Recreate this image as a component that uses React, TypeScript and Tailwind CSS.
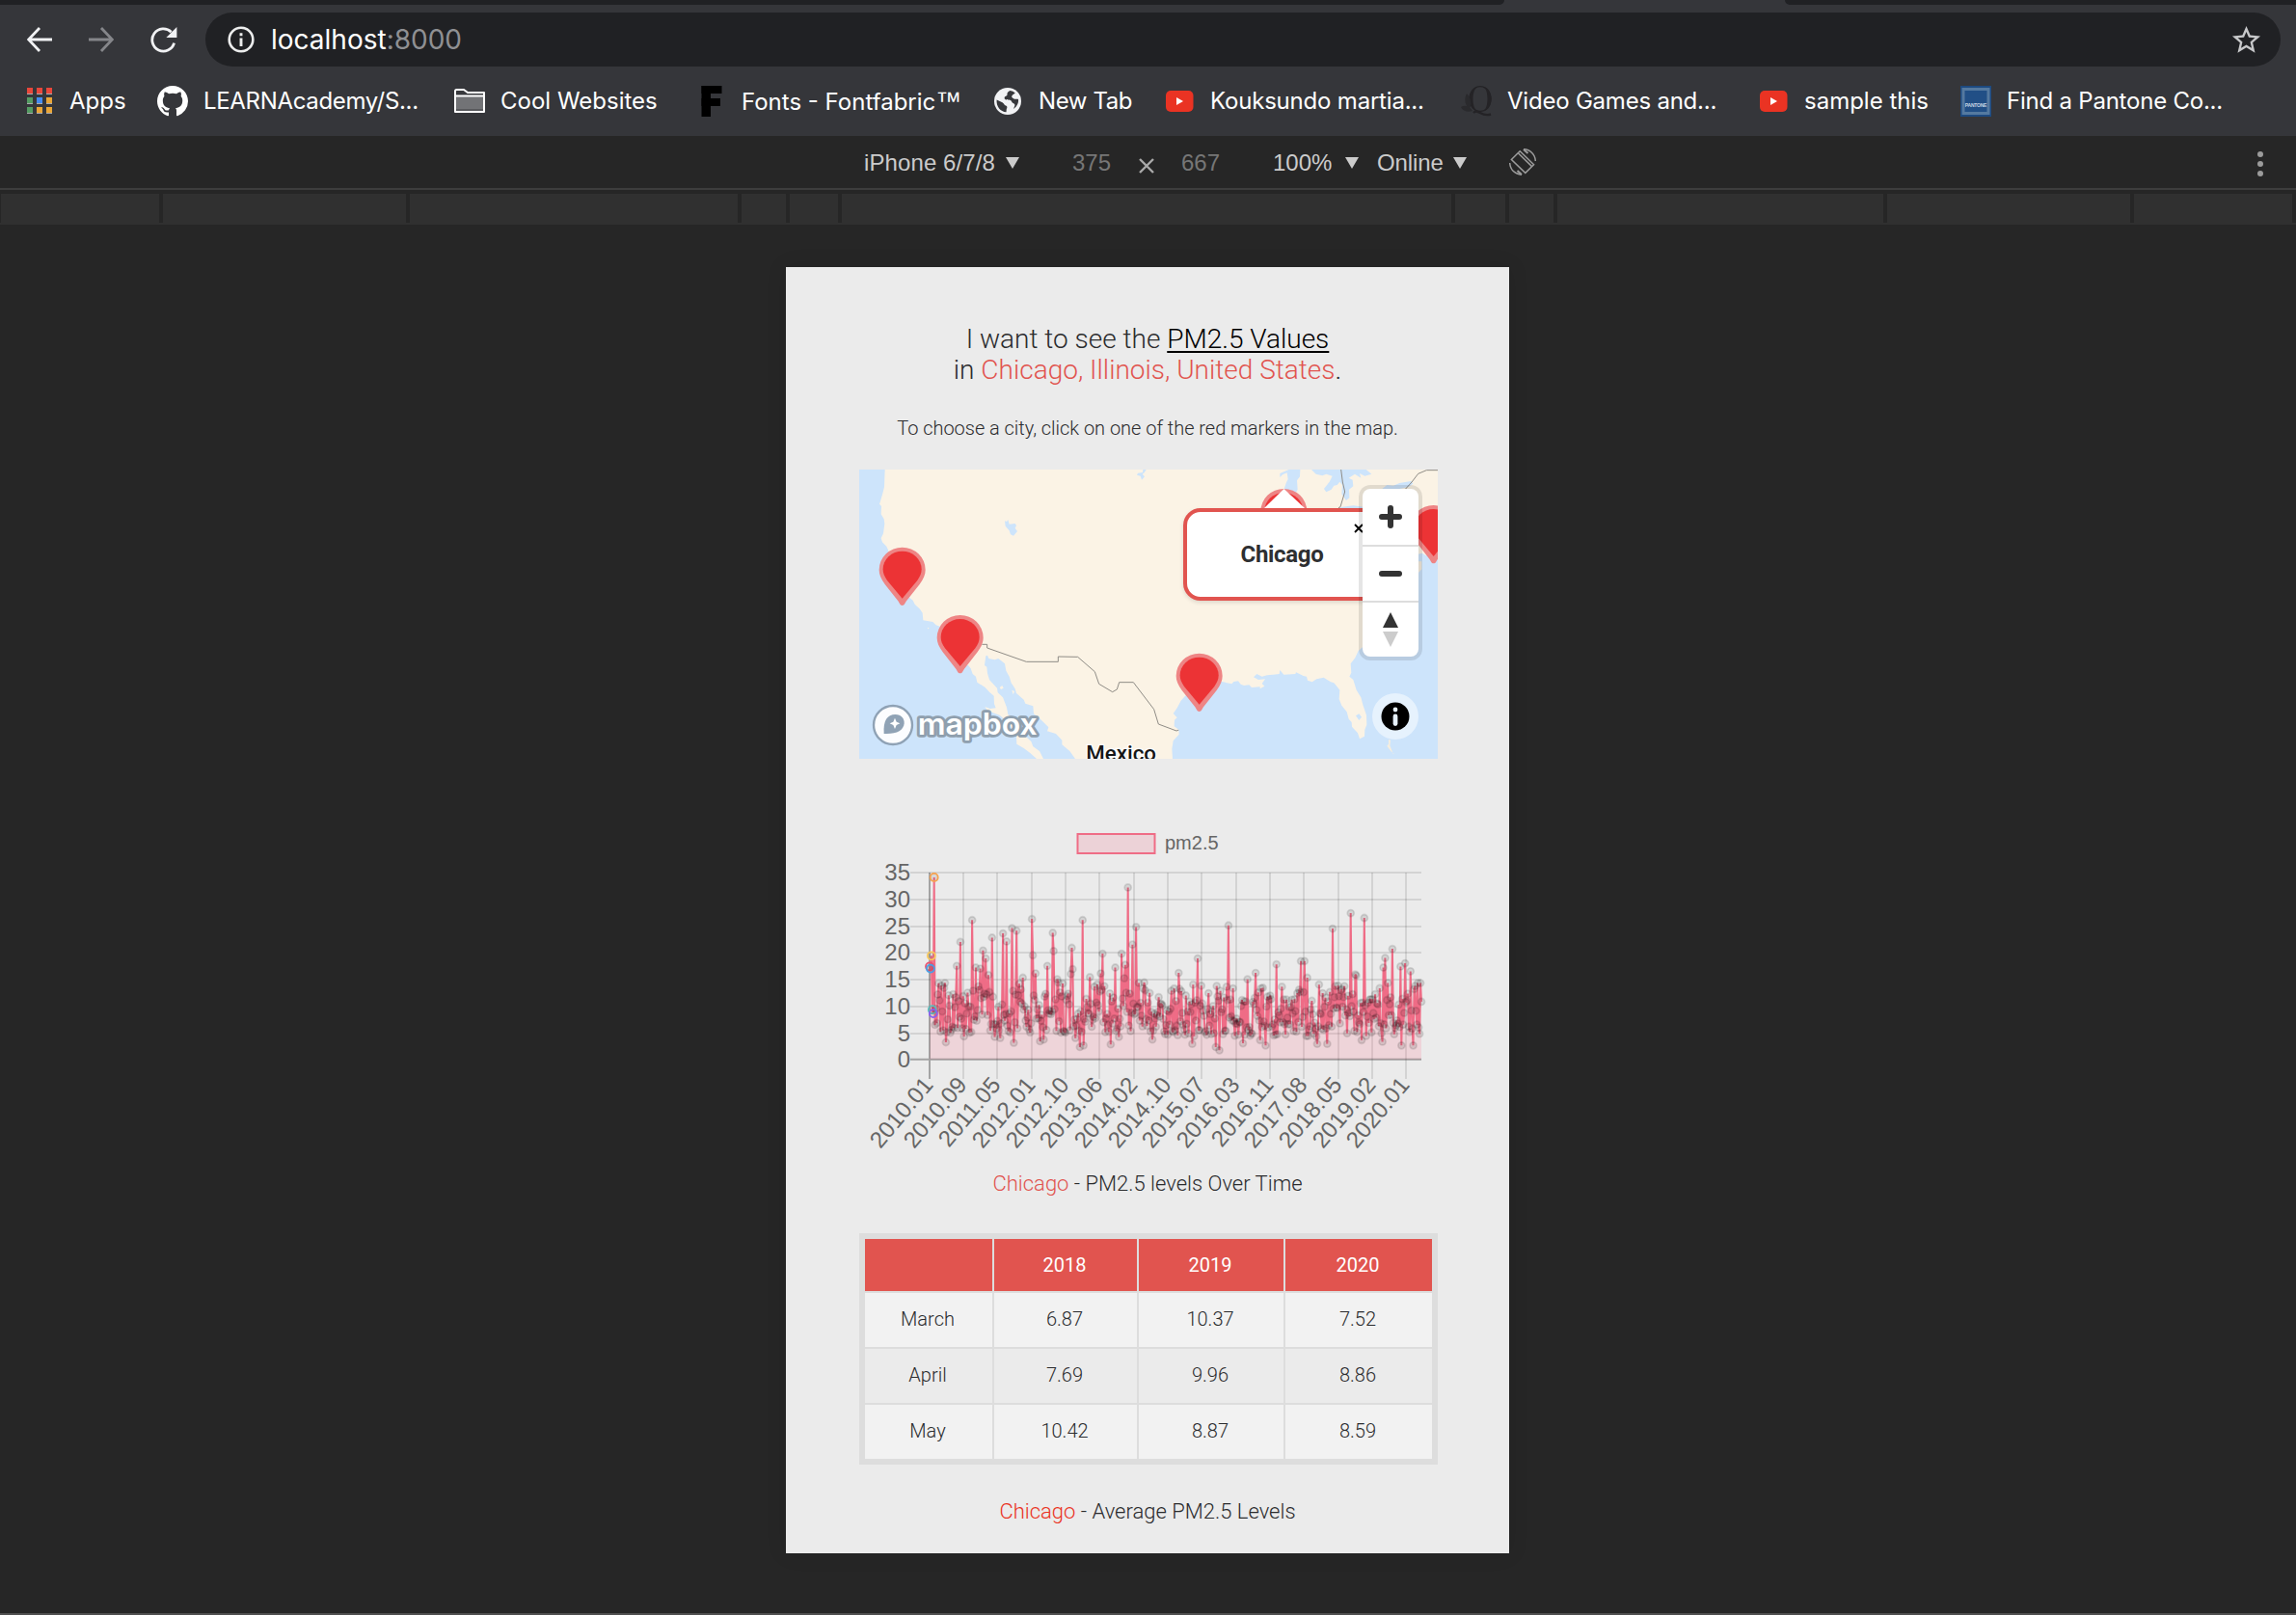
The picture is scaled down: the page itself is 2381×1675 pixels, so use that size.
import React from "react";

/* ---------- Browser chrome ---------- */

function ArrowIcon({ flip = false }: { flip?: boolean }) {
  return (
    <svg viewBox="0 0 26 26" className={flip ? "h-[26px] w-[26px] rotate-180 text-[#85868a]" : "h-[26px] w-[26px] text-[#f1f2f4]"}>
      <path d="M26 13H2M13 1L1.6 13L13 25" fill="none" stroke="currentColor" strokeWidth="2.8" />
    </svg>
  );
}

function ReloadIcon() {
  return (
    <svg viewBox="0 0 28 28" className="h-7 w-7">
      <path d="M24.6 17.6A11.6 11.6 0 1 1 21.6 6.2" fill="none" stroke="#f1f2f4" strokeWidth="2.8" />
      <path d="M27.4 1V12H16.4Z" fill="#f1f2f4" />
    </svg>
  );
}

function AppsIcon() {
  const rows = [
    ["#e8473b", "#e8473b", "#e8473b"],
    ["#559c63", "#438bf2", "#eaa637"],
    ["#559c63", "#eaa637", "#eaa637"],
  ];
  return (
    <svg viewBox="0 0 32 32" className="h-8 w-8">
      {rows.map((row, r) =>
        row.map((fill, c) => (
          <g key={`${r}-${c}`}>
            <rect x={4 + c * 10} y={2 + r * 10} width="6" height="7" fill="#a9aaac" />
            <rect x={4 + c * 10} y={2 + r * 10} width="6" height="6" fill={fill} />
          </g>
        ))
      )}
    </svg>
  );
}

function GithubIcon() {
  return (
    <svg viewBox="0 0 16 16" className="h-8 w-8">
      <path
        fill="#fff"
        d="M8 0C3.58 0 0 3.58 0 8c0 3.54 2.29 6.53 5.47 7.59.4.07.55-.17.55-.38 0-.19-.01-.82-.01-1.49-2.01.37-2.53-.49-2.69-.94-.09-.23-.48-.94-.82-1.13-.28-.15-.68-.52-.01-.53.63-.01 1.08.58 1.23.82.72 1.21 1.87.87 2.33.66.07-.52.28-.87.51-1.07-1.78-.2-3.64-.89-3.64-3.95 0-.87.31-1.59.82-2.15-.08-.2-.36-1.02.08-2.12 0 0 .67-.21 2.2.82.64-.18 1.32-.27 2-.27s1.36.09 2 .27c1.53-1.04 2.2-.82 2.2-.82.44 1.1.16 1.92.08 2.12.51.56.82 1.27.82 2.15 0 3.07-1.87 3.75-3.65 3.95.29.25.54.73.54 1.48 0 1.07-.01 1.93-.01 2.2 0 .21.15.46.55.38A8.01 8.01 0 0 0 16 8c0-4.42-3.58-8-8-8z"
      />
    </svg>
  );
}

function FolderIcon() {
  return (
    <svg viewBox="0 0 32 32" className="h-8 w-8">
      <path d="M1 7V27H31V7H14L10 4H2.500Q1 4 1 5.500Z" fill="#38393d" stroke="#fff" strokeWidth="2" strokeLinejoin="round" />
      <path d="M2 11H30V26H2Z" fill="#727376" />
      <path d="M2 24H30V26H2Z" fill="#58595c" />
      <path d="M1 10.500H31" stroke="#fff" strokeWidth="2" />
    </svg>
  );
}

function FontfabricIcon() {
  return (
    <svg viewBox="0 0 32 32" className="h-8 w-8">
      <rect x="6.500" y="0" width="9.500" height="32" fill="#000" />
      <rect x="6.500" y="0" width="21" height="8" fill="#000" />
      <rect x="6.500" y="13" width="19.500" height="8" fill="#000" />
    </svg>
  );
}

function GlobeIcon() {
  return (
    <svg viewBox="0 0 32 32" className="h-8 w-8">
      <circle cx="16" cy="16" r="14" fill="#f1f2f4" />
      <path d="M4.600 14.500L10.500 17.300C12.500 18.300 12 20.200 14 20.400C15.500 20.600 15.800 22.500 14.800 24L14.500 27.200C8.500 27 4 21.500 4.600 14.500Z" fill="#36373b" />
      <path d="M18.500 5C16.500 6 15 7 15.500 9.500C15 11 12 10.500 12.800 13.500C14 15.500 18.500 13.500 20 16C20.500 18.500 23 17.500 23.500 20L22 24C25.500 21.500 27.500 18 27 14C25.500 13 24.500 14.500 22.500 13.500C20 12 19.500 11.500 21 9.500L23.800 7.400Q21.500 5.500 18.500 5Z" fill="#36373b" />
    </svg>
  );
}

function YoutubeIcon() {
  return (
    <svg viewBox="0 0 32 32" className="h-8 w-8">
      <rect x="2" y="5" width="28.500" height="22" rx="5" fill="#ea3323" />
      <path d="M13 12V20L20 16Z" fill="#fff" />
    </svg>
  );
}

function QuillIcon() {
  return (
    <svg viewBox="0 0 32 32" className="h-8 w-8">
      <ellipse cx="20" cy="13.500" rx="11" ry="12.800" fill="none" stroke="#242326" strokeWidth="1.300" />
      <path d="M12.500 13.500C12.500 7 14.500 3 17 1C12 2 8.500 7.500 8.500 13.500C8.500 20 12 25 17 26.500C14 24 12.500 20 12.500 13.500ZM27.500 13.500C27.500 7 26 3 23.500 1C28.500 2 31.500 7.500 31.500 13.500C31.500 20 28.500 25 23.500 26.500C26 24 27.500 20 27.500 13.500Z" fill="#242326" />
      <path d="M13 28C18 23 21 33 31 29.500" fill="none" stroke="#242326" strokeWidth="2.400" />
      <path d="M6 8C11 13 11 20 9 24C4 20 3 14 6 8ZM0 22C5 19 10 22 12 26C7 28 2 26 0 22Z" fill="#2a2a2d" />
    </svg>
  );
}

function PantoneIcon() {
  return (
    <svg viewBox="0 0 32 32" className="h-8 w-8">
      <rect width="32" height="32" fill="#1d4a80" />
      <rect x="3" y="3.500" width="26" height="25" fill="#214f86" stroke="#54799f" strokeWidth="3" />
      <text x="16" y="22.300" textAnchor="middle" fill="#c9d6e4" className="font-['Liberation_Sans'] text-[5px] font-bold">
        PANTONE
      </text>
    </svg>
  );
}

const bookmarks = [
  { label: "Apps", icon: <AppsIcon />, box: "w-[139px]" },
  { label: "LEARNAcademy/S...", icon: <GithubIcon />, box: "w-[308px] tracking-[-0.33px]" },
  { label: "Cool Websites", icon: <FolderIcon />, box: "w-[250px]" },
  { label: "Fonts - Fontfabric", mark: "™", icon: <FontfabricIcon />, box: "w-[308px]" },
  { label: "New Tab", icon: <GlobeIcon />, box: "w-[178px] tracking-[-0.4px]" },
  { label: "Kouksundo martia...", icon: <YoutubeIcon />, box: "w-[308px] tracking-[-0.2px]" },
  { label: "Video Games and...", icon: <QuillIcon />, box: "w-[308px] tracking-[-0.22px]" },
  { label: "sample this", icon: <YoutubeIcon />, box: "w-[210px]" },
  { label: "Find a Pantone Co...", icon: <PantoneIcon />, box: "w-[308px] tracking-[-0.22px]" },
];

function BrowserBar() {
  return (
    <header className="h-[141px] bg-[#35363a] font-[Inter,sans-serif] text-white">
      <div className="flex h-[5px] justify-between">
        <div className="w-[1560px] rounded-br-[8px] bg-[#202124]" />
        <div className="w-[530px] rounded-bl-[8px] bg-[#202124]" />
      </div>
      <div className="flex h-[72px] items-center pl-7">
        <ArrowIcon />
        <div className="ml-[38px]">
          <ArrowIcon flip />
        </div>
        <div className="ml-[38px]">
          <ReloadIcon />
        </div>
        <div className="ml-[29px] flex h-14 w-[2152px] items-center rounded-full bg-[#202124] pr-[18px] pl-[23px]">
          <svg viewBox="0 0 28 28" className="h-7 w-7">
            <circle cx="14" cy="14" r="12.300" fill="none" stroke="#eceded" strokeWidth="2.600" />
            <path d="M14 7.300v2.900M14 12.500V21" stroke="#eceded" strokeWidth="2.900" />
          </svg>
          <p className="ml-[17px] text-[28px] leading-none">
            localhost<span className="text-[#8f9093]">:8000</span>
          </p>
          <svg viewBox="0 0 24 24" className="ml-auto h-[35px] w-[35px]">
            <path
              fill="#c7c8ca"
              d="M22 9.240l-7.190-.62L12 2 9.190 8.630 2 9.240l5.460 4.730L5.820 21 12 17.270 18.180 21l-1.630-7.030L22 9.240zM12 15.400l-3.760 2.270 1-4.280-3.320-2.880 4.380-.38L12 6.100l1.710 4.040 4.380.38-3.320 2.880 1 4.280L12 15.400z"
            />
          </svg>
        </div>
      </div>
      <nav className="flex h-14 items-center pl-6 text-[24px] leading-none">
        {bookmarks.map((b) => (
          <div key={b.label} className={"flex shrink-0 items-center gap-4 whitespace-nowrap " + b.box}>
            {b.icon}
            <span>
              {b.label}
              {b.mark && <span className="font-['Liberation_Sans'] text-[27px] leading-none">{b.mark}</span>}
            </span>
          </div>
        ))}
      </nav>
    </header>
  );
}

/* ---------- Device toolbar ---------- */

function Caret() {
  return (
    <svg viewBox="0 0 14 12" className="h-3 w-[14px]">
      <path d="M0 0H14L7 12Z" fill="#cbcbcb" />
    </svg>
  );
}

function RotateIcon() {
  return (
    <svg viewBox="0 0 28 28" className="h-7 w-7" fill="none" stroke="#9b9b9b" strokeWidth="1.500">
      <path d="M11.200 2.800L2.400 11.500L16.800 25.400L25.600 16.700Z" />
      <path d="M9.300 4.800L23.600 18.600" />
      <path d="M15 .8C22 1.200 27 6 27.300 13M13 27.200C6 26.800 1 22 .7 15" />
      <path d="M15 1L19.500 5M13 27L8.500 23" strokeWidth="2" />
    </svg>
  );
}

function DeviceToolbar() {
  return (
    <div className="flex h-[54px] items-center bg-[#262626] pt-[2px] pr-[33px] pl-[896px] font-['Liberation_Sans',Arial,sans-serif] text-[24px] leading-none text-[#cbcbcb]">
      <span className="w-[147px] tracking-[0.1px]">iPhone 6/7/8</span>
      <Caret />
      <span className="ml-[55px] w-[69px] text-[#767676]">375</span>
      <svg viewBox="0 0 16 16" className="mt-[6px] h-4 w-4">
        <path d="M1 1L15 15M15 1L1 15" stroke="#a9a9a9" strokeWidth="2.400" />
      </svg>
      <span className="ml-[28px] w-[95px] text-[#767676]">667</span>
      <span className="w-[75px]">100%</span>
      <Caret />
      <span className="ml-[19px] w-[79px] tracking-[-0.1px]">Online</span>
      <Caret />
      <div className="ml-[44px] -mt-[2px]">
        <RotateIcon />
      </div>
      <svg viewBox="0 0 8 28" className="ml-auto h-7 w-2 fill-[#9b9b9b]">
        <circle cx="4" cy="5" r="3" />
        <circle cx="4" cy="15" r="3" />
        <circle cx="4" cy="25" r="3" />
      </svg>
    </div>
  );
}

const rulerCells = [
  "w-[164px]", "w-[252px]", "w-[340px]", "w-[46px]", "w-[50px]", "w-[632px]",
  "w-[52px]", "w-[46px]", "w-[338px]", "w-[252px]", "w-[164px]",
];

function Ruler() {
  return (
    <div className="h-[38px] border-t-2 border-[#3d3d3d] bg-[#262626] pt-1">
      <div className="h-8 bg-[#303030]">
        <div className="flex h-[30px] gap-1 bg-[#262626] pl-px">
          {rulerCells.map((w, i) => (
            <div key={i} className={"shrink-0 bg-[#303030] " + w} />
          ))}
        </div>
      </div>
    </div>
  );
}

/* ---------- Map ---------- */

function Pin({ x, y }: { x: number; y: number }) {
  return (
    <g transform={`translate(${x} ${y})`}>
      <path d="M0 0C-7 0-9-8-13-14L-54-66C-66-82-72-96-72-111A72 70 0 0 1 72-111C72-96 66-82 54-66L13-14C9-8 7 0 0 0Z" fill="#ee8585" />
      <path d="M0-22L-47-78C-56-91-60-101-60-113A60 56 0 0 1 60-113C60-101 56-91 47-78Z" fill="#ec3335" />
    </g>
  );
}

function MapDrawing() {
  return (
    <svg viewBox="0 0 1800 900" className="block h-[300px] w-[600px]">
      <rect width="1800" height="900" fill="#fbf3e5" />
      <g transform="translate(-33 -36)">
        <g fill="#cde4fb">
          <path d="M33 36H113L111 90L106 110L98 138L96 143L102 150L101 175L110 190L112 205L108 235L101 250L105 262L118 275L124 288L122 310L135 330L150 390L182 428L200 443L206 455L222 470L230 482L232 505L262 510L272 520L288 526L300 560L330 610L350 640L372 645L380 655L386 672L396 680L400 698L425 714L438 728L452 740L453 765L458 778L440 780L424 774L432 786L470 800L500 826L522 868L523 890L545 903L565 918L585 936H33Z" />
          <path d="M427 616L432 614L436 624L455 628L466 624L486 640L490 662L500 680L506 700L518 718L522 732L545 752L550 764L574 772L576 796L590 806L600 816L622 838L618 850L645 858L664 878L664 892L688 912L705 936H606L594 912L574 898L568 882L546 862L540 844L520 818L496 798L492 776L480 745L464 730L462 716L438 690L432 670L430 650L423 645Z" />
          <path d="M486 196L492 198L496 192L500 206L518 204L522 210L518 218L525 228L513 242L504 238L500 226L488 212Z" />
          <path d="M916 36H926L920 46L914 50L921 58L912 68L908 56L897 53L900 47L915 45Z" />
        </g>
        <g fill="#fbf3e5">
          <path d="M470 714L478 708L482 716L474 720ZM508 722L516 726L512 736ZM246 527L251 530L246 532Z" />
        </g>
        <path d="M415 580H431V591L553 634H652V618L713 619L766 665L779 703L821 728L835 720L842 698H886L950 782L964 828L1020 849L1030 845" fill="none" stroke="#8f8c86" strokeWidth="3" />
      </g>
      <g transform="translate(897 -36)">
        <g fill="#cde4fb">
          <path d="M78 936L76 905L80 880L98 860L97 845L83 835L84 815L92 808L80 795L92 778L104 755L116 742L150 715L200 692L236 697L262 703L268 696L282 694L290 704L300 708L316 706L324 714L350 712V718L364 710L356 702L366 688L345 690L330 682L340 672L356 680L372 676L390 674L410 672L412 660L424 674L460 672L462 667L485 678L495 680L498 692L512 697L526 688L548 683L570 697L580 700L590 712L598 722L596 750L604 770L620 790L626 812L635 822L636 836L654 856L660 874L675 866L676 845L682 830L681 800L670 768L664 745L650 722L640 690L628 680L634 668L632 640L646 622L656 600L690 570L730 520L750 480L760 440L800 400L832 370L853 345L843 325L838 300L855 296L866 304L880 296L903 285V936Z" />
          <path d="M412 48L440 36H475L474 58L465 70L467 98L450 130H430L424 98L432 76L437 66L434 46L420 52L412 60Z" />
          <path d="M510 36L524 50L544 55L556 50L575 56L566 74L549 96L556 106L572 98L580 86L590 84L598 74L606 84L604 112L618 132L628 124L627 98L640 88L638 68L626 62L645 50L664 62L660 48L676 56L697 50L680 36Z" />
          <path d="M594 156L606 152L640 148L672 152V166L640 160L606 166Z" />
          <path d="M730 96L745 84L765 86L784 78L820 72L826 80L812 90L780 97Z" />
          <path d="M648 802L658 796L666 806L658 816Z" />
        </g>
        <path d="M843 322H853V345L844 355ZM750 876L756 878L754 895L764 920L768 922L757 912L745 896L750 890Z" fill="#f7eede" />
        <path d="M602 36L607 75L614 105L600 152L594 155M903 38H868L842 49L822 75L802 97" fill="none" stroke="#8f8c86" strokeWidth="3" />
        <Pin x={161} y={789} />
        <Pin x={424} y={277} />
        <Pin x={890} y={328} />
      </g>
      <text x="706" y="906" textLength="218" lengthAdjust="spacingAndGlyphs" className="fill-[#161616] font-[Roboto] text-[68px] font-medium" stroke="#fff" strokeWidth="8" paintOrder="stroke">
        Mexico
      </text>
      <Pin x={134} y={423} />
      <Pin x={314} y={634} />
      <g>
        <circle cx="105" cy="795" r="60" fill="#fcfdff" stroke="#8fa2b5" strokeWidth="7" />
        <path d="M77 822C74 780 88 762 112 762C132 762 141 776 140 790C138 812 116 824 77 822Z" fill="#8fa2b5" />
        <path d="M111 773L116 785L127 790L116 795L111 807L106 795L95 790L106 785Z" fill="#fff" />
        <text x="182" y="824" textLength="372" lengthAdjust="spacingAndGlyphs" className="fill-white font-[Inter] text-[92px] font-semibold" stroke="#8f9fae" strokeWidth="17" strokeLinejoin="round" paintOrder="stroke">
          mapbox
        </text>
      </g>
    </svg>
  );
}

function MapPanel() {
  return (
    <section className="relative mt-[31px] h-[300px] w-[600px] overflow-hidden">
      <MapDrawing />
      <div className="absolute top-[40px] left-[336px] flex h-24 w-[210px] items-center justify-center rounded-[18px] border-4 border-[#e1544f] bg-white shadow-[0_2px_4px_rgba(0,0,0,0.12)]">
        <span className="mr-[5px] text-[24px] leading-none font-bold tracking-[-0.3px] text-[#2e2f31]">Chicago</span>
        <svg viewBox="0 0 10 10" className="absolute top-[12px] left-[173px] h-[10px] w-[10px]">
          <path d="M1 1L9 9M9 1L1 9" stroke="#000" strokeWidth="1.800" />
        </svg>
      </div>
      <svg viewBox="0 0 42 20" className="absolute top-[20px] left-[420px] h-5 w-[42px]">
        <path d="M20.500 0L42 20H0Z" fill="#fff" />
      </svg>
      <div className="absolute top-[20px] left-[522px] flex w-[58px] flex-col rounded-[8px] bg-white shadow-[0_0_0_4px_rgba(0,0,0,0.1)]">
        <div className="flex h-[60px] items-center justify-center border-b-2 border-[#dddddd]">
          <svg viewBox="0 0 24 24" className="h-6 w-6">
            <path d="M12 3V21M3 12H21" stroke="#333" strokeWidth="6" strokeLinecap="round" />
          </svg>
        </div>
        <div className="flex h-[58px] items-center justify-center border-b-2 border-[#dddddd]">
          <svg viewBox="0 0 24 24" className="h-6 w-6">
            <path d="M3 12H21" stroke="#333" strokeWidth="6" strokeLinecap="round" />
          </svg>
        </div>
        <div className="flex h-[56px] items-center justify-center">
          <svg viewBox="0 0 16 36" className="h-9 w-4">
            <path d="M8 0L16 16H0Z" fill="#333" />
            <path d="M0 20H16L8 36Z" fill="#ccc" />
          </svg>
        </div>
      </div>
      <svg viewBox="0 0 48 48" className="absolute top-[232px] left-[532px] h-12 w-12">
        <circle cx="24" cy="24" r="24" fill="#fff" opacity="0.5" />
        <circle cx="24" cy="24" r="14.500" fill="#000" />
        <circle cx="24" cy="17" r="2.400" fill="#e6f1fd" />
        <rect x="21.600" y="21.500" width="4.800" height="12.500" rx="2.400" fill="#e6f1fd" />
      </svg>
    </section>
  );
}

/* ---------- Chart ---------- */

const POINTS = 544;
const PLOT = { left: 73, right: 583, unit: 5.535, zero: 248.7 };

/* Values of the first six samples, which have coloured markers. */
const opening = [17.4, 17, 19.4, 9.3, 8.6, 34.1];
const openingColors = ["#e9506e", "#45a0e8", "#f8c85c", "#5cbcbc", "#8a5ff0", "#f6a14e"];

/* Local highs and lows: [horizontal position on the plot, pm2.5]. */
const extremes: [number, number][] = [
  [80.500, 6.8], [84.3, 5.2], [85.3, 13.8], [89.3, 14.3], [90.3, 3.2], [94.3, 5], [101, 17.5], [105, 22], [108.3, 4.3],
  [114.7, 5], [117, 26.1], [121, 17.2], [125.7, 17], [128, 20.4], [131.7, 18.9], [134.3, 15.8], [137.7, 22.8],
  [140.7, 4.2], [146, 4], [149.3, 23.6], [153.3, 22.1], [158, 24.6], [160, 3.1], [163, 24.1], [170, 15.3],
  [178.7, 26.3], [179.7, 19.5], [182.7, 16.1], [187.7, 3.4], [191.3, 3.7], [195.3, 17.5], [200.3, 23.7],
  [201.3, 20.3], [205, 15], [213, 5.2], [219.3, 16], [220.2, 20.9], [221.3, 16.9], [224.3, 4], [228.7, 2.3],
  [231.7, 26.1], [233, 2.6], [239.3, 15.4], [250.3, 16.1], [252, 19.8], [261.3, 2.8], [266, 17.2], [269.3, 4.2],
  [272, 19.8], [275.3, 15.2], [276.3, 17.7], [278.7, 32.2], [283.7, 21.5], [286.7, 24.8], [295.3, 14.4], [303.7, 3.7],
  [331, 16.2], [332, 13.2], [345.3, 2.9], [346.3, 14], [351, 18.9], [355, 13.8], [362, 12.4], [369.7, 2.3],
  [372, 11.8], [374, 1.7], [380.7, 13.6], [382.7, 25.1], [387.3, 13.3], [397.7, 3], [402.3, 15], [411.3, 16.2],
  [415.7, 3.6], [417, 13.3], [421.7, 2.6], [432.7, 17.8], [438, 13.6], [442.7, 11.2], [454.7, 12.4], [458.3, 18.4],
  [462.3, 18.4], [465, 15.3], [475, 2.9], [477, 14], [480.7, 12.4], [485.7, 2.9], [490.7, 24.5], [496.7, 13.8],
  [503.3, 13.7], [509.3, 27.4], [512, 12.2], [514.3, 15.9], [515.3, 15.7], [521.3, 3.6], [524, 26.5], [534.7, 12.2],
  [542.3, 3.3], [543.3, 17.2], [545.3, 19], [548.3, 14.3], [553.3, 20.7], [561.3, 17.4], [562.3, 2.6], [566, 18],
  [571.3, 16.5], [574.7, 2.6], [579.3, 14.3], [580.7, 4.8], [582, 14.3], [583, 10.8],
];

function buildSeries(): number[] {
  let seed = 20107;
  const rand = () => {
    seed = (seed * 1103515245 + 12345) % 2147483648;
    return seed / 2147483648;
  };
  const series = Array.from({ length: POINTS }, (_, i) => {
    const season = 0.85 + 0.15 * Math.sin(i / 7);
    const early = i < 260 ? 0.7 : 0;
    return 4.3 + early + 9.6 * season * Math.pow(rand(), 1.15);
  });
  opening.forEach((v, i) => {
    series[i] = v;
  });
  extremes.forEach(([x, v]) => {
    series[Math.round(((x - PLOT.left) / (PLOT.right - PLOT.left)) * (POINTS - 1))] = v;
  });
  return series;
}

const xTicks = [
  ["2010.01", 73], ["2010.09", 108], ["2011.05", 143], ["2012.01", 179], ["2012.10", 214],
  ["2013.06", 249], ["2014.02", 285], ["2014.10", 320], ["2015.07", 355], ["2016.03", 391],
  ["2016.11", 426], ["2017.08", 461], ["2018.05", 497], ["2019.02", 532], ["2020.01", 567],
] as const;
const yTicks = [
  [35, 55], [30, 83], [25, 111], [20, 138], [15, 166], [10, 194], [5, 222],
] as const;

function Chart() {
  const series = buildSeries();
  const points = series.map((v, i) => ({
    x: PLOT.left + ((PLOT.right - PLOT.left) * i) / (POINTS - 1),
    y: PLOT.zero - v * PLOT.unit,
  }));
  const line = points.map((p) => `${p.x.toFixed(1)} ${p.y.toFixed(1)}`).join("L");
  return (
    <svg viewBox="0 0 600 350" className="mt-[63px] block h-[350px] w-[600px] overflow-visible font-['Liberation_Sans',Arial,sans-serif]">
      <rect x="226.500" y="15" width="80" height="20" fill="#ecd2d7" stroke="#ef6d86" strokeWidth="2" />
      <text x="317" y="31" fill="#666" className="text-[20px]">pm2.5</text>
      <g stroke="#000" strokeOpacity="0.1" strokeWidth="2">
        {yTicks.map(([v, y]) => (
          <path key={v} d={`M53 ${y}H583`} />
        ))}
        {xTicks.slice(1).map(([t, x]) => (
          <path key={t} d={`M${x} 55V269`} />
        ))}
      </g>
      <path d={`M${PLOT.left} ${PLOT.zero}L${line}L${PLOT.right} ${PLOT.zero}Z`} fill="#ff6384" fillOpacity="0.17" />
      <path d="M53 248.700H583M73 55V269" stroke="#000" strokeOpacity="0.3" strokeWidth="2" />
      <path d={`M${line}`} fill="none" stroke="#ef6c86" strokeWidth="2" strokeLinejoin="bevel" />
      {points.map((p, i) =>
        i < 6 ? null : (
          <circle key={i} cx={p.x} cy={p.y} r="3.500" fill="#000" fillOpacity="0.1" stroke="#000" strokeOpacity="0.11" strokeWidth="1.800" />
        )
      )}
      {openingColors.map((c, i) => (
        <circle key={c} cx={points[i].x} cy={points[i].y} r="4" fill="#000" fillOpacity="0.08" stroke={c} strokeWidth="1.800" />
      ))}
      <g fill="#666" className="text-[24px]">
        {yTicks.map(([v, y]) => (
          <text key={v} x="53" y={y + 8} textAnchor="end">{v}</text>
        ))}
        <text x="53" y="257" textAnchor="end">0</text>
        {xTicks.map(([t, x]) => (
          <text key={t} textAnchor="end" transform={`translate(${x - 1} 271) rotate(-50)`} y="7.500">{t}</text>
        ))}
      </g>
    </svg>
  );
}

/* ---------- Table ---------- */

const rows = [
  ["March", "6.87", "10.37", "7.52"],
  ["April", "7.69", "9.96", "8.86"],
  ["May", "10.42", "8.87", "8.59"],
];

function AveragesTable() {
  return (
    <div className="mt-[38px] grid w-[600px] grid-cols-[132px_148px_150px_152px] gap-[2px] border-6 border-[#dddddd] bg-[#dddddd] text-[20px]">
      {["", "2018", "2019", "2020"].map((y) => (
        <div key={y} className="flex h-[54px] items-center justify-center bg-[#e1544f] pr-[2px] text-white">
          {y}
        </div>
      ))}
      {rows.map((r, i) =>
        r.map((cell) => (
          <div
            key={r[0] + cell}
            className={
              "flex h-14 items-center justify-center pr-[2px] pb-[2px] font-[350] " + (i % 2 ? "bg-[#ebebeb]" : "bg-[#f2f2f2]")
            }
          >
            {cell}
          </div>
        ))
      )}
    </div>
  );
}

export default function App() {
  return (
    <div className="h-[1675px] w-[2381px] overflow-hidden bg-[#262626]">
      <BrowserBar />
      <DeviceToolbar />
      <Ruler />
      <main className="mt-[44px] ml-[815px] h-[1334px] w-[750px] bg-[#ebebeb] pt-[59px] pr-[74px] pl-[76px] font-[Roboto,sans-serif] text-[#2b2c2e] shadow-[0_0_20px_rgba(0,0,0,0.1)]">
        <h1 className="pr-[2px] text-center text-[28px] leading-8 font-[350]">
          I want to see the{" "}
          <span className="text-black underline decoration-2 underline-offset-[3px]">PM2.5 Values</span>
          <br />
          in <span className="text-[#e1544f]">Chicago, Illinois, United States</span>.
        </h1>
        <p className="mt-[32px] pr-[2px] text-center text-[20px] leading-6 font-[350] tracking-[-0.03px]">
          To choose a city, click on one of the red markers in the map.
        </p>
        <MapPanel />
        <Chart />
        <p className="mt-[15px] pr-[2px] text-center text-[22px] leading-[26px] font-[350]">
          <span className="text-[#e1544f]">Chicago</span> - PM2.5 levels Over Time
        </p>
        <AveragesTable />
        <p className="mt-[36px] pr-[2px] text-center text-[22px] leading-[26px] font-[350]">
          <span className="text-[#ea3323]">Chicago</span> - Average PM2.5 Levels
        </p>
      </main>
      <div className="mt-[62px] h-[2px] bg-[#4e4e4e]" />
    </div>
  );
}
